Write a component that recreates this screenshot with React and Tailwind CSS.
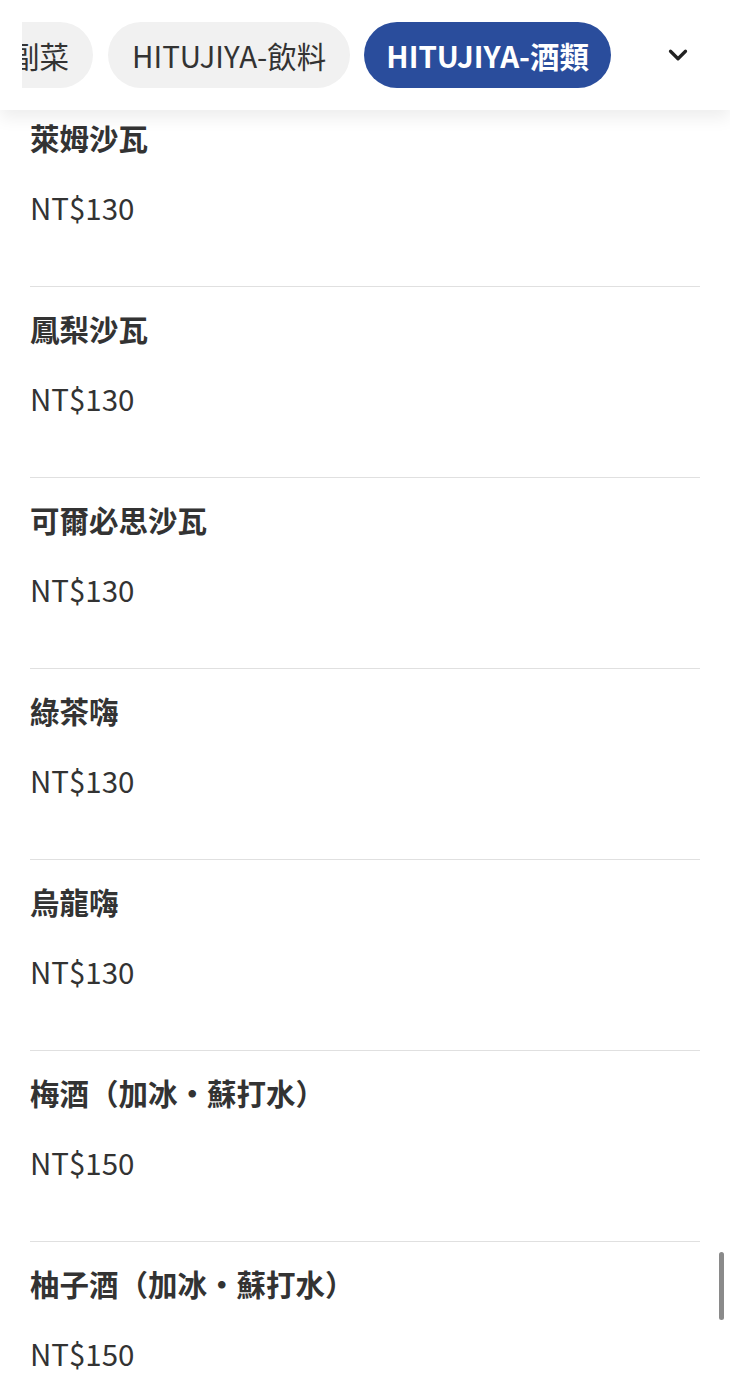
import { ChevronDown } from 'lucide-react';

const items = [
    { name: '萊姆沙瓦', price: 'NT$130' },
    { name: '鳳梨沙瓦', price: 'NT$130' },
    { name: '可爾必思沙瓦', price: 'NT$130' },
    { name: '綠茶嗨', price: 'NT$130' },
    { name: '烏龍嗨', price: 'NT$130' },
    { name: '梅酒（加冰・蘇打水）', price: 'NT$150' },
    { name: '柚子酒（加冰・蘇打水）', price: 'NT$150' },
];

const font = { fontFamily: '"Noto Sans CJK TC", "Noto Sans", sans-serif' };

export default function App() {
    return (
        <div className="relative h-[1375px] w-[730px] overflow-hidden bg-white text-[#333333]" style={font}>
            <header className="absolute left-0 top-0 z-10 flex h-[110px] w-full items-center bg-white shadow-[0_8px_16px_rgba(0,0,0,0.07)]">
                <div className="ml-[22px] flex h-full flex-1 items-center gap-[15px] overflow-hidden">
                    <span className="ml-[-36px] flex h-[66px] shrink-0 items-center rounded-full bg-[#f1f1f1] px-6 text-[29.5px]">副菜</span>
                    <span className="flex h-[66px] shrink-0 items-center rounded-full bg-[#f1f1f1] px-6 text-[29.5px]">HITUJIYA-飲料</span>
                    <span className="ml-[-1px] flex h-[66px] shrink-0 items-center rounded-full bg-[#2a4d9c] px-[22px] text-[29.5px] font-bold text-white">HITUJIYA-酒類</span>
                </div>
                <div className="flex h-full w-[104px] shrink-0 items-center justify-center bg-white">
                    <ChevronDown size={30} strokeWidth={2.6} className="text-[#222]" />
                </div>
            </header>

            <div className="pt-[96px]">
                {items.map((item) => (
                    <div key={item.name} className="mx-[30px] border-b border-[#e0e0e0] pb-[61px] pt-[23px]">
                        <p className="text-[29.5px] font-bold leading-[36px]">{item.name}</p>
                        <p className="mt-[34px] text-[29.5px] leading-[36px]">{item.price}</p>
                    </div>
                ))}
            </div>

            <div className="absolute right-[6px] top-[1252px] h-[68px] w-[5px] rounded-full bg-[#8a8a8a]" />
        </div>
    );
}
